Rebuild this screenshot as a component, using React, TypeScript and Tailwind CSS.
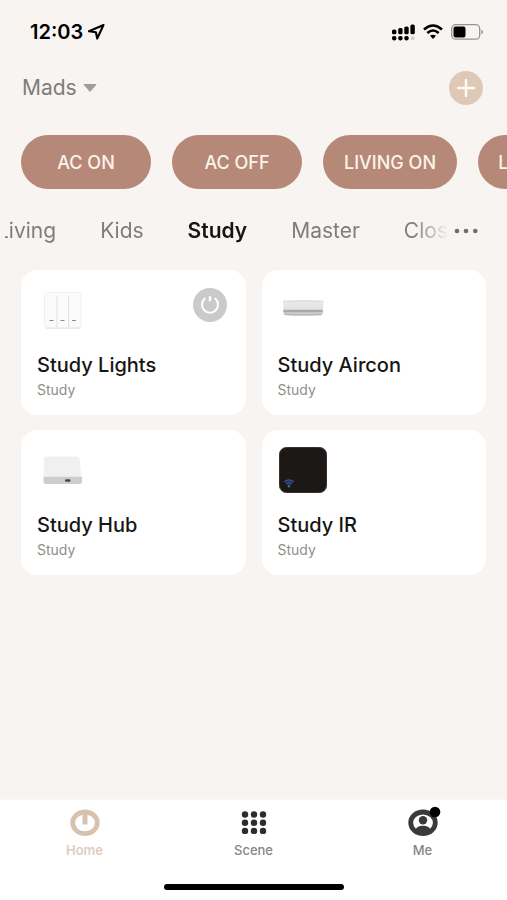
import type { ReactNode } from 'react';
import clsx from 'clsx';

interface Device {
  name: string;
  room: string;
  image: ReactNode;
  hasSwitch?: boolean;
}

const scenes = [
  { label: 'AC ON', width: 'w-[130px]' },
  { label: 'AC OFF', width: 'w-[130px]' },
  { label: 'LIVING ON', width: 'w-[134px]' },
  { label: 'LIVING OFF', width: 'w-[140px]' }
];

const rooms = ['Living', 'Kids', 'Study', 'Master', 'Closet'];

// Device pictures
const SwitchImage = () => (
  <svg viewBox="0 0 48 46" className="h-[46px] w-12" aria-hidden="true">
    <rect x="6.500" y="5.500" width="36.500" height="36" rx="3" fill="#fbfbfb" stroke="#f0f0f0" />
    <path d="M19 9v31.500M30.700 9v31.500" stroke="#dedede" strokeWidth="1" />
    <path d="M8 41h34" stroke="#e2e2e2" strokeWidth="1.200" />
    <path d="M11.500 33.500h4M22.500 33.500h4M34 33.500h4" stroke="#8c8c8c" strokeWidth="1.200" />
  </svg>
);

const AirconImage = () => (
  <svg viewBox="0 0 48 46" className="h-[46px] w-12" aria-hidden="true">
    <defs>
      <linearGradient id="aircon" x1="0" y1="0" x2="0" y2="1">
        <stop offset="0" stopColor="#cfcfcf" />
        <stop offset="0.150" stopColor="#e9e9e9" />
        <stop offset="0.550" stopColor="#e2e2e2" />
        <stop offset="0.700" stopColor="#c0c0c0" />
        <stop offset="1" stopColor="#d4d4d4" />
      </linearGradient>
    </defs>
    <path d="M4 13.800Q24 12.600 44.500 13.800l-.7 12.700-1 1.500Q24 29.200 5.500 28l-1-1.500z" fill="url(#aircon)" />
    <path d="M4.500 24h39" stroke="#a0a0a0" strokeWidth="1.300" />
    <path d="M5.500 27.600q18.500 1 37 0" stroke="#acacac" fill="none" />
  </svg>
);

const HubImage = () => (
  <svg viewBox="0 0 48 46" className="h-[46px] w-12" aria-hidden="true">
    <path d="M8.500 9.500h31q2 0 2.200 2.500L43.500 32H5.500L6 12q.2-2.500 2.500-2.500z" fill="#f0f0f0" />
    <path d="M5.500 29.800h38.500v4.700q0 2.500-2.500 2.500H8q-2.500 0-2.500-2.500z" fill="#cdcdcd" />
    <rect x="27" y="32.300" width="5.500" height="2.500" rx="1.200" fill="#444" />
  </svg>
);

const RemoteImage = () => (
  <svg viewBox="0 0 48 46" className="h-[46px] w-12" aria-hidden="true">
    <rect x="0.500" y="0.500" width="47" height="45" rx="7" fill="#1b1816" stroke="#34312f" />
    <path d="M5.500 34.500q4.500-3.300 9 0L10 40z" fill="#24355a" />
    <g fill="none" stroke="#34508a" strokeWidth="1.200">
      <path d="M5 34.700q5-3.500 10 0" />
      <path d="M7.300 37q2.700-2 5.400 0" />
    </g>
    <circle cx="10" cy="39.300" r="1.200" fill="#4566a6" />
  </svg>
);

const devices: Device[] = [
  { name: 'Study Lights', room: 'Study', image: <SwitchImage />, hasSwitch: true },
  { name: 'Study Aircon', room: 'Study', image: <AirconImage /> },
  { name: 'Study Hub', room: 'Study', image: <HubImage /> },
  { name: 'Study IR', room: 'Study', image: <RemoteImage /> }
];

const StatusBar = () => (
  <div className="flex h-16 items-center justify-between pr-[23px] pl-[30px]">
    <div className="flex items-center gap-1 text-[20px] font-semibold text-black">
      <span>12:03</span>
      <svg viewBox="0 0 18 18" className="h-[18px] w-[18px]" aria-hidden="true">
        <path
          d="M16.500 2 2 8.300l6.900.9 1.300 6.300z"
          fill="none"
          stroke="#000"
          strokeWidth="2.100"
          strokeLinejoin="round"
        />
      </svg>
    </div>
    <div className="flex items-center gap-2">
      {/* Dual SIM signal */}
      <svg viewBox="0 0 23 17" className="h-[17px] w-[23px]" aria-hidden="true">
        <rect x="0" y="5.500" width="4.400" height="4.800" rx="1.600" />
        <rect x="6.200" y="4" width="4.400" height="6.300" rx="1.600" />
        <rect x="12.300" y="2.500" width="4.400" height="7.800" rx="1.600" />
        <rect x="18.400" y="0.500" width="4.400" height="9.800" rx="1.600" />
        <rect x="0" y="12" width="4.400" height="4.400" rx="1.800" />
        <rect x="6.200" y="12" width="4.400" height="4.400" rx="1.800" />
        <rect x="12.300" y="12" width="4.400" height="4.400" rx="1.800" />
        <rect x="18.600" y="12.200" width="4" height="4" rx="1.800" fill="#d2cfcc" />
      </svg>
      <svg viewBox="0 0 20 16" className="h-4 w-5" aria-hidden="true">
        <g fill="none" stroke="#000" strokeWidth="2.600">
          <path d="M1 5.500Q10-2.500 19 5.500" />
          <path d="M4.300 9Q10 4 15.700 9" />
        </g>
        <path d="M7 11.800q3-2.300 6 0L10 15z" />
      </svg>
      <svg viewBox="0 0 33 16" className="h-4 w-[33px]" aria-hidden="true">
        <rect x="0.700" y="0.700" width="28" height="14.500" rx="4" fill="none" stroke="#96938f" strokeWidth="1.300" />
        <rect x="2.500" y="2.500" width="12" height="11" rx="2" />
        <path d="M30.500 5.500q3 2.500 0 5z" fill="#85827f" />
      </svg>
    </div>
  </div>
);

const DeviceCard = ({ name, room, image, hasSwitch }: Device) => (
  <article className="rounded-2xl bg-white px-4 pt-[17px] pb-3.5">
    <div className="flex h-[46px] items-start justify-between pr-[3px] pl-px">
      {image}
      {hasSwitch && (
        <button
          type="button"
          aria-label={`Toggle ${name}`}
          className="mt-px flex h-[34px] w-[34px] items-center justify-center rounded-full bg-[#cacaca]"
        >
          <svg viewBox="0 0 20 20" className="h-5 w-5" fill="none" stroke="#fff" strokeLinecap="round" aria-hidden="true">
            <path d="M4.800 3.600a8 8 0 1 0 10.400 0" strokeWidth="2" />
            <path d="M10 2.300v3" strokeWidth="2.400" />
          </svg>
        </button>
      )}
    </div>
    <h2 className="mt-[18px] text-xl leading-7 font-medium text-[#161616]">{name}</h2>
    <p className="text-sm leading-[22px] text-[#8e8e8e]">{room}</p>
  </article>
);

const App = () => {
  return (
    <div className="flex min-h-screen flex-col overflow-hidden bg-[#f8f4f1] font-['Inter',sans-serif]">
      <StatusBar />

      <header className="flex h-12 items-center justify-between pr-6 pl-[22px]">
        <button type="button" className="flex items-center gap-1.5 text-[21px] text-[#7f7c79]">
          Mads
          <svg viewBox="0 0 14 8" className="h-2 w-3.5" aria-hidden="true">
            <path d="M1 .5h12L7 7.500z" fill="#a09d9a" stroke="#a09d9a" strokeLinejoin="round" />
          </svg>
        </button>
        <button
          type="button"
          aria-label="Add device"
          className="flex h-[34px] w-[34px] items-center justify-center rounded-full bg-[#dfc9b6]"
        >
          <svg viewBox="0 0 18 18" className="h-[18px] w-[18px]" stroke="#fffaf5" strokeWidth="2.400" strokeLinecap="round" aria-hidden="true">
            <path d="M9 1v16M1 9h16" />
          </svg>
        </button>
      </header>

      {/* Quick scenes */}
      <div className="mt-[23px] flex gap-[21px] overflow-hidden pl-[21px]">
        {scenes.map((scene) => (
          <button
            key={scene.label}
            type="button"
            className={clsx(
              'h-[54px] shrink-0 rounded-full bg-[#b68877] text-[18px] font-medium whitespace-nowrap text-[#fdf3ea]',
              scene.width
            )}
          >
            {scene.label}
          </button>
        ))}
      </div>

      {/* Rooms */}
      <nav className="mt-[22px] flex h-10 items-center pr-7 pl-[5px]" aria-label="Rooms">
        <div className="min-w-0 flex-1 overflow-hidden [mask-image:linear-gradient(to_left,transparent,black_36px)]">
          <div className="-ml-2 flex gap-11">
            {rooms.map((room) => (
              <button
                key={room}
                type="button"
                className={clsx(
                  'shrink-0 text-[21px] leading-8',
                  room === 'Study' ? 'font-semibold text-[#161514]' : 'text-[#7f7c79]'
                )}
              >
                {room}
              </button>
            ))}
          </div>
        </div>
        <button type="button" aria-label="All rooms" className="ml-1">
          <svg viewBox="0 0 26 8" className="h-2 w-[26px]" fill="#6f6c6a" aria-hidden="true">
            <circle cx="4" cy="4" r="2.300" />
            <circle cx="13" cy="4" r="2.300" />
            <circle cx="22.300" cy="4" r="2.300" />
          </svg>
        </button>
      </nav>

      <main className="mt-[19px] grid flex-1 grid-cols-2 content-start gap-x-4 gap-y-[15px] px-[21px] pb-6">
        {devices.map((device) => (
          <DeviceCard key={device.name} {...device} />
        ))}
      </main>

      <footer className="bg-white pb-[10px] shadow-[0_0_4px_rgba(255,255,255,0.8)]">
        <nav className="grid grid-cols-3 text-[13px] leading-5 font-medium text-[#868686]">
          <a href="#home" className="flex flex-col items-center gap-1 pt-1.5 font-semibold text-[#dccdbf]">
            <svg viewBox="0 0 30 30" className="h-[30px] w-[30px]" aria-hidden="true">
              <ellipse cx="15" cy="16.800" rx="12.300" ry="10.800" fill="none" stroke="#d6c2ae" strokeWidth="4.800" />
              <path d="M15 5v13.500" stroke="#d6c2ae" strokeWidth="5" />
            </svg>
            Home
          </a>
          <a href="#scene" className="flex flex-col items-center gap-1 pt-1.5">
            <svg viewBox="0 0 30 30" className="h-[30px] w-[30px]" fill="#2d2d2f" aria-hidden="true">
              {[8.5, 16.700, 24.900].map((y) =>
                [6, 15, 24].map((x) => <circle key={`${x}-${y}`} cx={x} cy={y} r="3.200" />)
              )}
            </svg>
            Scene
          </a>
          <a href="#me" className="flex flex-col items-center gap-1 pt-1.5">
            <svg viewBox="0 0 30 30" className="h-[30px] w-[30px] overflow-visible" aria-hidden="true">
              <ellipse cx="15" cy="16.800" rx="12.300" ry="10.800" fill="#fff" stroke="#3a3a3c" strokeWidth="4.800" />
              <circle cx="15" cy="14.300" r="4.200" fill="#3a3a3c" />
              <path d="M7 24.500q1.500-4.800 8-4.800t8 4.800q-3.500 3.500-8 3.500t-8-3.500z" fill="#3a3a3c" />
              <circle cx="27" cy="6" r="5.300" fill="#000" />
            </svg>
            Me
          </a>
        </nav>
        <div className="mx-auto mt-6 h-1.5 w-[180px] rounded-full bg-black" />
      </footer>
    </div>
  );
};

export default App;
